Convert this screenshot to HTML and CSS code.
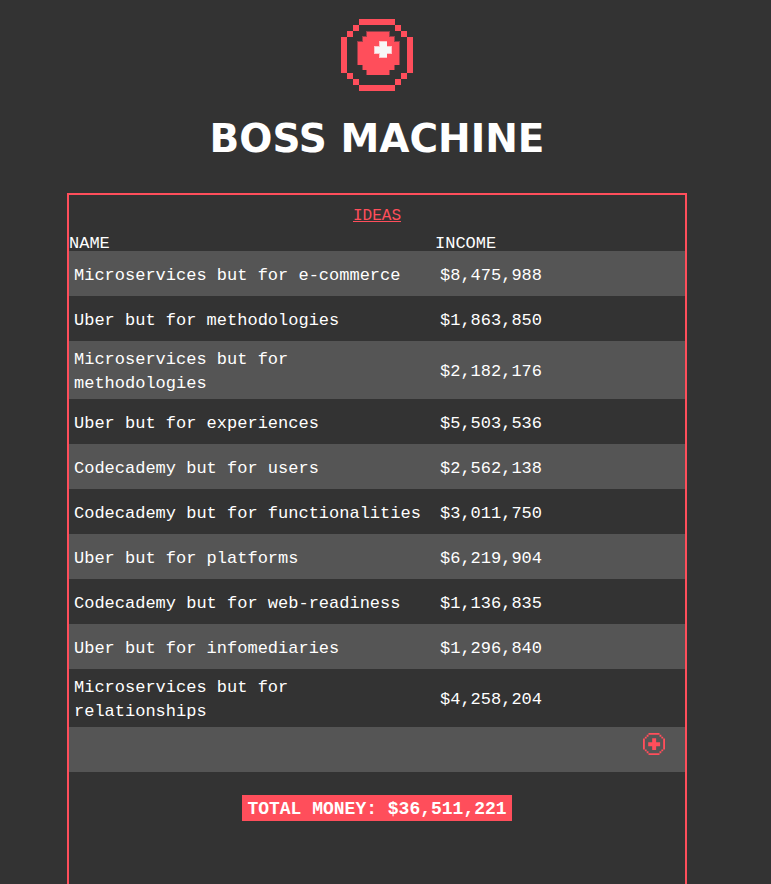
FILE: index.html
```
<!DOCTYPE html>
<html lang="en">
<head>
<meta charset="utf-8">
<title>Boss Machine</title>
<meta name="viewport" content="width=device-width, initial-scale=1">
<link rel="stylesheet" href="styles.css">
</head>
<body>
<header class="header">
  <svg class="logo" viewBox="0 0 72 72" aria-hidden="true" shape-rendering="crispEdges">
    <path class="accent" d="M18 0h36v6H18zM12 6h6v6h-6zM54 6h6v6h-6zM6 12h6v6H6zM60 12h6v6h-6zM0 18h6v36H0zM66 18h6v36h-6zM6 54h6v6H6zM60 54h6v6h-6zM12 60h6v6h-6zM54 60h6v6h-6zM18 66h36v6H18z"/>
    <path class="shade" d="M25 12h24v5h5v5h5v24h-5v5h-5v5H25v-5h-4v-5h-5V22h5v-5h4z"/>
    <path class="accent" d="M26 13h22v5h5v5h5v23h-5v5h-5v5H26v-5h-4v-5h-5V23h5v-5h4z"/>
    <path class="halo" d="M38 22h8v5h5v8h-5v4h-8v-4h-5v-8h5z"/>
    <path class="shine" d="M39 23h7v5h4v6h-4v4h-7v-4h-5v-6h5z"/>
  </svg>
  <h1 class="title">BOSS MACHINE</h1>
</header>
<main class="panel">
  <table class="ideas">
    <caption><a class="ideas-link" href="#ideas">IDEAS</a></caption>
    <colgroup><col class="name-col"><col></colgroup>
    <thead>
      <tr><th scope="col">NAME</th><th scope="col">INCOME</th></tr>
    </thead>
    <tbody id="ideas">
      <tr><td>Microservices but for e-commerce</td><td>$8,475,988</td></tr>
      <tr><td>Uber but for methodologies</td><td>$1,863,850</td></tr>
      <tr><td>Microservices but for methodologies</td><td>$2,182,176</td></tr>
      <tr><td>Uber but for experiences</td><td>$5,503,536</td></tr>
      <tr><td>Codecademy but for users</td><td>$2,562,138</td></tr>
      <tr><td>Codecademy but for functionalities</td><td>$3,011,750</td></tr>
      <tr><td>Uber but for platforms</td><td>$6,219,904</td></tr>
      <tr><td>Codecademy but for web-readiness</td><td>$1,136,835</td></tr>
      <tr><td>Uber but for infomediaries</td><td>$1,296,840</td></tr>
      <tr><td>Microservices but for relationships</td><td>$4,258,204</td></tr>
      <tr>
        <td class="add-cell" colspan="2">
          <button class="add" type="button" aria-label="Add idea">
            <svg class="add-icon" viewBox="0 0 72 72" aria-hidden="true">
              <path class="accent" d="M18 0h36v6H18zM12 6h6v6h-6zM54 6h6v6h-6zM6 12h6v6H6zM60 12h6v6h-6zM0 18h6v36H0zM66 18h6v36h-6zM6 54h6v6H6zM60 54h6v6h-6zM12 60h6v6h-6zM54 60h6v6h-6zM18 66h36v6H18z"/>
              <path class="accent" d="M30 17h13v13h13v13H43v13H30V43H17V30h13z"/>
            </svg>
          </button>
        </td>
      </tr>
    </tbody>
  </table>
  <p class="total">TOTAL MONEY: $36,511,221</p>
</main>
</body>
</html>
```
FILE: styles.css
```
* {
  box-sizing: border-box;
}

body {
  display: flex;
  flex-direction: column;
  min-height: 100vh;
  margin: 0;
  padding: 19px 17px 0 0;
  background: #333;
  color: #fff;
  font: 17px/24px "Liberation Mono", monospace;
}

.header {
  display: flex;
  flex-direction: column;
  align-items: center;
  gap: 24px;
}

.logo {
  width: 72px;
  height: 72px;
}

.accent {
  fill: #ff4e5b;
}

.shade {
  fill: #96404a;
}

.halo {
  fill: #ffc4c8;
}

.shine {
  fill: #f7f7f7;
}

.title {
  margin: 0 0 30px;
  font: bold 39px/48px "DejaVu Sans", sans-serif;
}

.panel {
  display: flex;
  flex: 1;
  flex-direction: column;
  align-items: center;
  gap: 23px;
  width: 100%;
  max-width: 620px;
  margin: 0 auto;
  padding-top: 9px;
  border: 2px solid #ff4e5b;
  border-bottom: 0;
}

.ideas {
  width: 100%;
  table-layout: fixed;
  border-collapse: collapse;
}

.ideas caption {
  padding-bottom: 8px;
  font-size: 16px;
}

.ideas-link {
  color: #ff4e5b;
}

.name-col {
  width: 366px;
}

.ideas th {
  padding: 0;
  font-weight: normal;
  line-height: 15px;
  text-align: left;
}

.ideas tbody tr {
  height: 45px;
}

.ideas tbody tr:nth-child(odd) {
  background: #555;
}

.ideas td {
  padding: 7px 5px 3px;
}

.ideas .add-cell {
  padding: 6px 20px 4px;
  text-align: right;
  vertical-align: top;
}

.add {
  display: inline-block;
  padding: 0;
  border: 0;
  background: none;
  line-height: 0;
  vertical-align: top;
  cursor: pointer;
}

.add-icon {
  width: 22px;
  height: 22px;
}

.total {
  margin: 0;
  padding: 2px 5px 0;
  background: #ff4e5b;
  font-size: 18px;
  font-weight: bold;
}
```
